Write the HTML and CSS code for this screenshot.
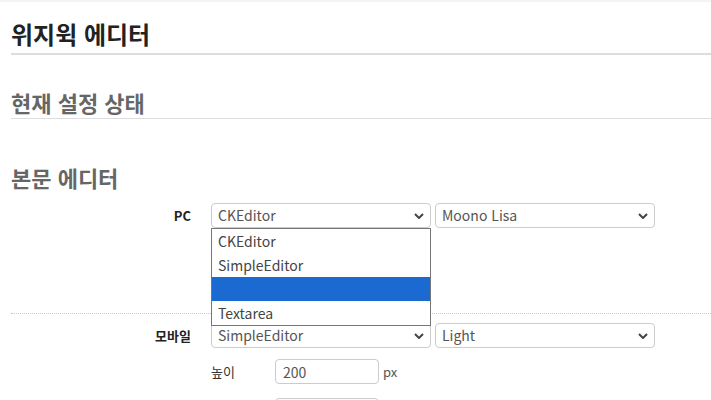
FILE: index.html
```html
<!DOCTYPE html>
<html lang="ko">
<head>
    <meta charset="UTF-8" />
    <title>위지윅 에디터</title>
    <link rel="stylesheet" href="styles.css">
</head>
<body>
    <div class="topbar"></div>
    <main class="content">
        <h1 class="page-title">위지윅 에디터</h1>

        <h2 class="section-title underlined">현재 설정 상태</h2>

        <h2 class="section-title spaced">본문 에디터</h2>

        <div class="form-row pc-row">
            <label class="row-label">PC</label>
            <div class="row-body">
                <div class="select-pair">
                    <div class="select-wrap">
                        <div class="select">CKEditor</div>
                        <!-- open select popup -->
                        <ul class="dropdown">
                            <li>CKEditor</li>
                            <li>SimpleEditor</li>
                            <li class="active"></li>
                            <li>Textarea</li>
                        </ul>
                    </div>
                    <div class="select">Moono Lisa</div>
                </div>
            </div>
        </div>

        <div class="form-row dotted">
            <label class="row-label">모바일</label>
            <div class="row-body">
                <div class="select-pair">
                    <div class="select">SimpleEditor</div>
                    <div class="select">Light</div>
                </div>
                <div class="sub-row">
                    <span class="sub-label">높이</span>
                    <input class="text-input" type="text" value="200">
                    <span class="unit">px</span>
                </div>
                <div class="sub-row last">
                    <span class="sub-label"></span>
                    <input class="text-input" type="text" value="">
                </div>
            </div>
        </div>
    </main>
</body>
</html>
```

FILE: styles.css
```css
*, *::before, *::after {
    box-sizing: border-box;
}

body {
    margin: 0;
    background: #fff;
    color: #333;
    font-family: 'Noto Sans CJK KR', 'Noto Sans', sans-serif;
    font-size: 14px;
}

.topbar {
    height: 2px;
    background: #f4f4f4;
}

.content {
    padding-left: 11px;
}

.page-title {
    margin: 0;
    padding-top: 16px;
    padding-bottom: 3px;
    font-size: 24px;
    line-height: 32px;
    color: #222;
    border-bottom: 2px solid #ddd;
}

.section-title {
    margin: 0;
    padding-top: 33px;
    font-size: 22px;
    line-height: 28px;
    color: #666;
}

.section-title.underlined {
    padding-bottom: 2px;
    border-bottom: 1px solid #ddd;
}

.section-title.spaced {
    padding-top: 44px;
}

.form-row {
    display: flex;
    padding: 12px 0 13px;
}

.form-row.pc-row {
    padding-bottom: 85px;
}

.form-row.dotted {
    border-top: 1px dotted #ccc;
    padding-top: 9px;
}

.row-label {
    width: 180px;
    text-align: right;
    font-size: 13px;
    font-weight: bold;
    color: #222;
    line-height: 25px;
}

.row-body {
    margin-left: 20px;
}

.select-pair {
    display: flex;
    gap: 4px;
}

.select-wrap {
    position: relative;
}

.select {
    width: 220px;
    height: 25px;
    padding: 0 6px;
    border: 1px solid #ccc;
    border-radius: 4px;
    line-height: 23px;
    color: #555;
    background: #fff url("data:image/svg+xml,%3Csvg xmlns='http://www.w3.org/2000/svg' width='10' height='6' viewBox='0 0 10 6'%3E%3Cpath d='M1 1l4 4 4-4' fill='none' stroke='%23444' stroke-width='2'/%3E%3C/svg%3E") no-repeat right 6px center;
}

.dropdown {
    position: absolute;
    top: 25px;
    left: 0;
    width: 220px;
    margin: 0;
    padding: 0;
    list-style: none;
    background: #fff;
    border: 1px solid #767676;
    z-index: 2;
}

.dropdown li {
    height: 24px;
    padding: 0 6px;
    line-height: 24px;
    color: #444;
}

.dropdown li.active {
    background: #1a6ad2;
}

.sub-row {
    display: flex;
    align-items: center;
    margin-top: 11px;
}

.sub-row.last {
    margin-top: 14px;
}

.sub-label {
    width: 64px;
    font-size: 13px;
    color: #333;
}

.text-input {
    width: 104px;
    height: 25px;
    padding: 0 7px;
    border: 1px solid #ccc;
    border-radius: 4px;
    font-family: inherit;
    font-size: 14px;
    color: #555;
}

.unit {
    margin-left: 4px;
    font-size: 13px;
    color: #555;
}
```
